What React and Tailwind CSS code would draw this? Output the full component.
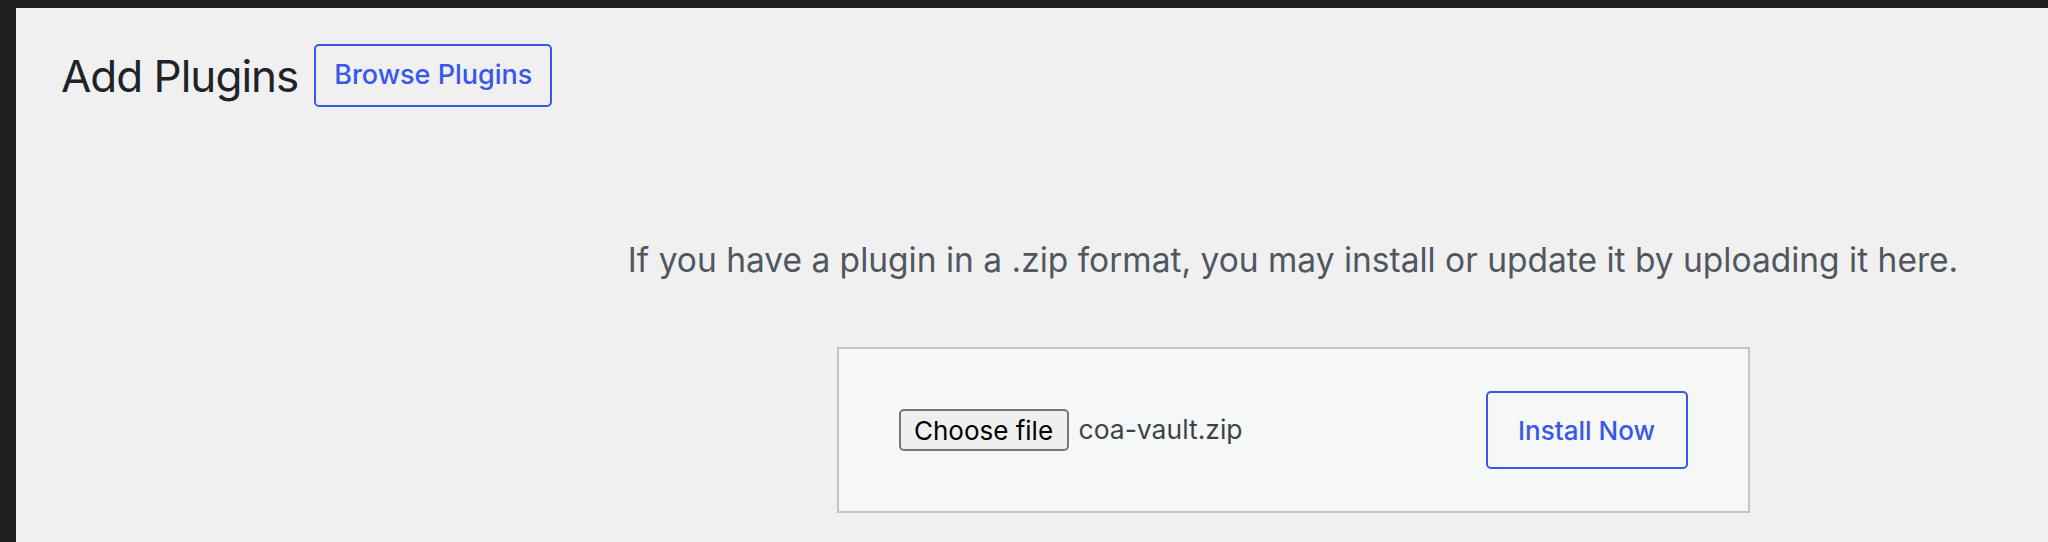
import { useState } from 'react';

// WP admin "Add Plugins" upload screen
export default function App() {
  const [fileName] = useState('coa-vault.zip');

  return (
    <div className="w-[2048px] h-[542px] bg-[#1e1e1e] pt-[8px] pl-[16px] flex font-[Inter,sans-serif] overflow-hidden">
      <div className="flex-1 bg-[#f0f0f1] flex flex-col">
        {/* ── Header ───────────────────────────── */}
        <div className="flex items-center pt-[36px] pl-[45px] gap-[16px]">
          <h1 className="text-[44px] leading-[56px] text-[#1d2327] font-normal tracking-[-1px]">Add Plugins</h1>
          <button className="w-[238px] h-[63px] border-2 border-[#3858e9] rounded-[5px] text-[#3858e9] text-[27px] font-medium flex items-center justify-center">
            Browse Plugins
          </button>
        </div>

        {/* ── Upload area ──────────────────────── */}
        <div className="ml-[522px] w-[1510px] flex flex-col items-center">
          <p className="mt-[133px] text-[33.5px] leading-[40px] text-[#50575e]">
            If you have a plugin in a .zip format, you may install or update it by uploading it here.
          </p>

          <div className="mt-[67px] w-[913px] h-[166px] border-2 border-[#c3c4c7] bg-[#f6f7f7] flex items-center justify-between px-[60px]">
            <div className="flex items-center gap-[10px]">
              <span className="w-[170px] h-[42px] bg-[#efefef] border-2 border-[#767676] rounded-[5px] flex items-center justify-center text-[26px] text-black">
                Choose file
              </span>
              <span className="text-[26.5px] text-[#3c434a]">{fileName}</span>
            </div>
            <button className="w-[202px] h-[78px] border-2 border-[#3858e9] rounded-[5px] text-[#3858e9] text-[26px] font-medium flex items-center justify-center">
              Install Now
            </button>
          </div>
        </div>
      </div>
    </div>
  );
}
